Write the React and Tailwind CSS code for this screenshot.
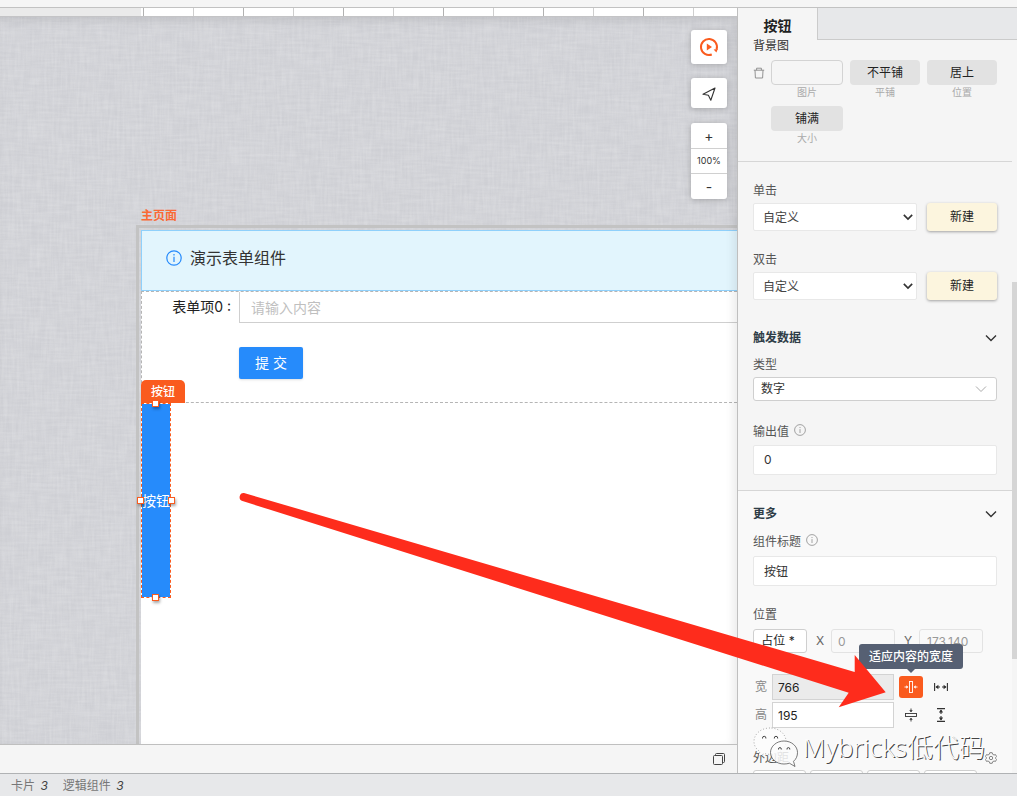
import React, { useState } from 'react';

const ticks = Array.from({ length: 40 }, (_, i) => i);

const ChevronDown = ({ className, strokeWidth = 1.6 }) => (
  <svg viewBox="0 0 12 12" className={className} fill="none" stroke="currentColor" strokeWidth={strokeWidth}>
    <path d="M1 3.5 L6 8.5 L11 3.5" />
  </svg>
);

const InfoIcon = ({ className }) => (
  <svg viewBox="0 0 16 16" className={className} fill="none" stroke="currentColor" strokeWidth="1.2">
    <circle cx="8" cy="8" r="7.2" />
    <path d="M8 6.8 V12" />
    <path d="M8 4 V5.4" />
  </svg>
);

const TrashIcon = () => (
  <svg viewBox="0 0 12 12" className="w-3 h-3 text-[#888]" fill="none" stroke="currentColor" strokeWidth="0.9">
    <path d="M0.8 3.2 H11.2" />
    <path d="M3.6 3.2 V1.2 H8.4 V3.2" />
    <path d="M2 3.2 L2.4 11 H9.6 L10 3.2" />
  </svg>
);

const FitWidthIcon = () => (
  <svg viewBox="0 0 14 14" className="w-3.5 h-3.5" fill="none" stroke="currentColor" strokeWidth="0.9">
    <rect x="5.5" y="1.5" width="3" height="11" />
    <path d="M0.5 7 H3.5 M10.5 7 H13.5" />
    <path d="M2.3 5.2 L4.3 7 L2.3 8.8 Z M11.7 5.2 L9.7 7 L11.7 8.8 Z" fill="currentColor" stroke="none" />
  </svg>
);

const FillWidthIcon = () => (
  <svg viewBox="0 0 14 14" className="w-3.5 h-3.5" fill="none" stroke="currentColor" strokeWidth="1.1">
    <path d="M0.6 3 V11 M13.4 3 V11 M2 7 H6 M8 7 H12" />
    <path d="M1.4 7 L4.4 4.8 V9.2 Z M12.6 7 L9.6 4.8 V9.2 Z" fill="currentColor" stroke="none" />
  </svg>
);

// Woven linen texture behind the artboard
function LinenBackground() {
  return (
    <svg className="absolute inset-0 w-full h-full" aria-hidden="true">
      <filter id="weft" x="0" y="0" width="100%" height="100%">
        <feTurbulence type="fractalNoise" baseFrequency="0.04 0.4" numOctaves="2" seed="3" />
        <feColorMatrix values="0 0 0 0 1  0 0 0 0 1  0 0 0 0 1  1.4 0 0 0 -0.4" />
      </filter>
      <filter id="warp" x="0" y="0" width="100%" height="100%">
        <feTurbulence type="fractalNoise" baseFrequency="0.4 0.04" numOctaves="2" seed="8" />
        <feColorMatrix values="0 0 0 0 1  0 0 0 0 1  0 0 0 0 1  1.4 0 0 0 -0.4" />
      </filter>
      <rect width="100%" height="100%" fill="#cecfd4" />
      <rect width="100%" height="100%" filter="url(#weft)" opacity="0.18" />
      <rect width="100%" height="100%" filter="url(#warp)" opacity="0.18" />
    </svg>
  );
}

function Ruler() {
  return (
    <div className="relative flex h-[9px] shrink-0 overflow-hidden border-b border-[#c4c4c6] bg-white">
      <div className="w-[141px] shrink-0 bg-[#eaeaea] mr-[2px]" />
      {ticks.map((i) => (
        <div
          key={i}
          className={`w-[50px] shrink-0 border-l ${i % 2 ? 'border-[#cfcfcf]' : 'border-[#b2b2b2]'}`}
        />
      ))}
    </div>
  );
}

function CanvasTools() {
  return (
    <div className="absolute right-2.5 top-[13px] flex w-9 flex-col text-[#333]">
      <button aria-label="预览" className="flex h-[34px] items-center justify-center rounded-[3px] bg-white shadow-[0_1px_6px_rgba(0,0,0,0.22)]">
        <svg viewBox="0 0 20 20" className="w-5 h-5" fill="none">
          <path d="M12.8 17.5 A8 8 0 1 1 17.6 12.4" stroke="#fa5b1e" strokeWidth="2" />
          <path d="M14.6 12.6 L18.8 12 L17.4 15.4 Z" fill="#fa5b1e" />
          <path d="M7.8 6.6 L13 10 L7.8 13.4 Z" fill="#fa5b1e" />
        </svg>
      </button>
      <button aria-label="发布" className="mt-3.5 flex h-[30px] items-center justify-center rounded-[3px] bg-white pt-[2px] shadow-[0_1px_6px_rgba(0,0,0,0.22)]">
        <svg viewBox="0 0 14 14" className="w-3.5 h-3.5" fill="none" stroke="currentColor" strokeWidth="1.1" strokeLinejoin="round">
          <path d="M13 1 L1 7.2 L6.4 8.2 L8.8 13.2 Z" />
        </svg>
      </button>
      <div className="mt-[15px] flex flex-col divide-y divide-[#d0d0d0] rounded-[3px] bg-white shadow-[0_1px_6px_rgba(0,0,0,0.22)]">
        <button className="h-[26px] text-sm leading-6">+</button>
        <span className="h-[25px] text-center text-[9px] leading-6">100%</span>
        <button className="h-[25px] text-sm leading-6">-</button>
      </div>
    </div>
  );
}

const Handle = ({ className }) => (
  <span className={`absolute w-[7px] h-[7px] border border-[#fa5b1e] bg-white shadow-[1px_2px_3px_rgba(0,0,0,0.35)] ${className}`} />
);

function Artboard() {
  return (
    <div className="relative ml-[136px] mt-[192px] flex flex-1 flex-col">
      <h2 className="ml-[5px] h-4 text-xs font-bold leading-[14px] text-[#fa6a35]">主页面</h2>
      <div className="flex flex-1 flex-col border-l-3 border-t-3 border-[#c3c3c3] pl-[2px] pt-[2px]">
        <div className="flex flex-1 flex-col bg-white">
          <div className="flex h-[61px] items-center gap-2 border border-r-0 border-[#8fd0fb] bg-[#e2f5fd] pl-6 pb-1.5">
            <InfoIcon className="w-4 h-4 text-[#2389fc]" />
            <span className="text-base leading-6 text-[#333]">演示表单组件</span>
          </div>
          <form className="h-[112px] border-y border-l border-dashed border-[#b5b5b5]" onSubmit={(e) => e.preventDefault()}>
            <div className="flex h-8">
              <label htmlFor="field-0" className="w-[97px] pr-2 text-right text-sm leading-[30px] text-[#222]">表单项0 :</label>
              <input
                id="field-0"
                placeholder="请输入内容"
                className="h-[31px] min-w-0 flex-1 border-b border-l border-[#cfcfcf] bg-white px-[11px] text-sm text-[#333] outline-none placeholder:text-[#bfbfbf]"
              />
            </div>
            <button className="ml-[97px] mt-[23px] h-8 w-16 rounded-xs bg-[#268bfb] text-sm text-white shadow-sm">提 交</button>
          </form>
          <div className="relative h-[195px] w-[30px]">
            <button className="flex h-full w-full items-center justify-center whitespace-nowrap border border-dashed border-[#fa5b1e] bg-[#268bfb] bg-clip-padding text-sm text-white">按钮</button>
            <span className="absolute bottom-full left-0 flex h-[23px] w-11 items-center justify-center rounded-t-[5px] bg-[#fa5b1e] text-xs font-medium text-white">按钮</span>
            <Handle className="-top-[3px] left-[11px]" />
            <Handle className="-bottom-[3px] left-[11px]" />
            <Handle className="-left-1 top-[94px]" />
            <Handle className="-right-1 top-[94px]" />
          </div>
        </div>
      </div>
    </div>
  );
}

function BackgroundCell({ label, value, width }) {
  return (
    <div className={`flex flex-col ${width}`}>
      <button
        aria-label={label}
        className={`h-[25px] rounded-[4px] text-xs text-[#222] ${value ? 'bg-[#e2e2e2]' : 'border border-[#d3d3d3]'}`}
      >
        {value}
      </button>
      <span className="text-center text-[10px] leading-[14px] text-[#aaa]">{label}</span>
    </div>
  );
}

function EventRow({ id, label, className }) {
  return (
    <div className={className}>
      <label htmlFor={id} className="block text-xs leading-5 text-[#555]">{label}</label>
      <div className="mt-[2px] flex gap-2.5">
        <div className="relative flex-1">
          <select id={id} className="block h-7 w-full appearance-none rounded-xs border border-[#e8e8e8] bg-white px-[9px] pt-[2px] text-xs text-[#444]">
            <option>自定义</option>
          </select>
          <ChevronDown className="pointer-events-none absolute right-1 top-2 w-2.5 h-3 text-[#333]" strokeWidth={2} />
        </div>
        <button className="h-7 w-[70px] rounded-[3px] bg-[#fcf5de] text-xs text-[#222] shadow-[0_1px_3px_rgba(0,0,0,0.35)]">新建</button>
      </div>
    </div>
  );
}

const SectionTitle = ({ children, className }) => (
  <div className={`flex items-center justify-between ${className}`}>
    <h3 className="text-xs font-bold leading-5 text-[#2f3d47]">{children}</h3>
    <button aria-label="收起">
      <ChevronDown className="w-3 h-3 text-[#333]" strokeWidth={1.4} />
    </button>
  </div>
);

function Inspector() {
  const [output, setOutput] = useState('0');
  const [title, setTitle] = useState('按钮');
  const [width, setWidth] = useState('766');
  const [height, setHeight] = useState('195');

  return (
    <aside className="relative flex w-[280px] shrink-0 flex-col overflow-hidden border-l border-[#bfbfbf] bg-[#f5f5f5]">
      <div className="flex h-8 shrink-0">
        <button className="w-[79px] pt-1 text-sm font-bold leading-7 text-[#222]">按钮</button>
        <div className="flex-1 border-b border-l border-[#cbcbcb] bg-[#e7e8ea]" />
      </div>

      <div className="flex min-h-0 flex-1">
        <div className="min-w-0 flex-1">
          {/* Background image */}
          <section className="border-b border-[#d6d6d6] px-[15px] pb-4">
            <h4 className="text-xs leading-3 text-[#333]">背景图</h4>
            <div className="mt-2 flex">
              <button aria-label="删除" className="mt-[7px] flex h-3 w-[18px] shrink-0"><TrashIcon /></button>
              <div className="flex flex-wrap gap-[7px]">
                <BackgroundCell label="图片" width="w-[72px]" />
                <BackgroundCell label="平铺" value="不平铺" width="w-[70px]" />
                <BackgroundCell label="位置" value="居上" width="w-[70px]" />
                <BackgroundCell label="大小" value="铺满" width="w-[72px]" />
              </div>
            </div>
          </section>

          {/* Events and output */}
          <section className="border-b border-[#d6d6d6] px-[15px] pb-[15px] pt-[19px]">
            <EventRow id="on-click" label="单击" />
            <EventRow id="on-dblclick" label="双击" className="mt-[19px]" />

            <SectionTitle className="mt-7">触发数据</SectionTitle>
            <label htmlFor="data-type" className="mt-[7px] block text-xs leading-5 text-[#555]">类型</label>
            <div className="relative mt-[2px]">
              <select id="data-type" className="block h-6 w-full appearance-none rounded-[3px] border border-[#cfcfcf] bg-white px-[7px] text-xs text-[#333]">
                <option>数字</option>
              </select>
              <ChevronDown className="pointer-events-none absolute right-2.5 top-1.5 w-3 h-3 text-[#aaa]" strokeWidth={1} />
            </div>
            <div className="mt-[21px] flex gap-[5px]">
              <label htmlFor="output" className="text-xs leading-5 text-[#555]">输出值</label>
              <InfoIcon className="mt-[2px] w-3 h-3 text-[#999]" />
            </div>
            <input
              id="output"
              value={output}
              onChange={(e) => setOutput(e.target.value)}
              className="mt-[3px] block h-[30px] w-full rounded-xs border border-[#e8e8e8] bg-white px-2.5 pb-[2px] text-xs text-[#333] outline-none"
            />
          </section>

          {/* More */}
          <section className="bg-[#f9f9f9] px-[15px] pt-[13px]">
            <SectionTitle>更多</SectionTitle>
            <div className="mt-2 flex gap-[5px]">
              <label htmlFor="title" className="text-xs leading-5 text-[#555]">组件标题</label>
              <InfoIcon className="mt-[2px] w-3 h-3 text-[#999]" />
            </div>
            <input
              id="title"
              value={title}
              onChange={(e) => setTitle(e.target.value)}
              className="mt-1 block h-[30px] w-full rounded-xs border border-[#e8e8e8] bg-white px-2.5 pb-[2px] text-xs text-[#333] outline-none"
            />

            <h4 className="mt-[19px] text-xs leading-5 text-[#555]">位置</h4>
            <div className="mt-1 flex h-6 items-center text-xs text-[#666]">
              <button className="h-6 w-[54px] rounded-[3px] border border-[#cfcfcf] bg-white pr-1 text-[#222]">占位 *</button>
              <label htmlFor="pos-x" className="w-6 pl-[2px] text-center">X</label>
              <input id="pos-x" disabled defaultValue="0" className="h-6 w-16 rounded-[3px] border border-[#e3e3e3] px-1.5 text-[#999]" />
              <label htmlFor="pos-y" className="w-6 pl-[2px] text-center">Y</label>
              <input id="pos-y" disabled defaultValue="173.140" className="h-6 w-16 rounded-[3px] border border-[#e3e3e3] px-[7px] text-[#999]" />
            </div>

            <div className="mt-[21px] flex flex-col gap-[2px] text-xs text-[#888]">
              <div className="flex h-[26px] items-center">
                <label htmlFor="width" className="w-[19px] pl-[2px]">宽</label>
                <input id="width" value={width} onChange={(e) => setWidth(e.target.value)} className="h-[26px] w-[122px] border border-[#d3d3d3] bg-[#ebebeb] px-[5px] text-[#222] outline-none" />
                <div className="relative ml-[5px]">
                  <button aria-label="适应内容的宽度" className="flex h-[22px] w-6 items-center justify-center rounded-[3px] bg-[#fa5b1e] text-white"><FitWidthIcon /></button>
                  <div role="tooltip" className="absolute bottom-[29px] left-1/2 flex h-[25px] w-[104px] -translate-x-1/2 items-center justify-center rounded-[3px] bg-[#566073] text-xs font-medium text-white">
                    适应内容的宽度
                    <span className="absolute left-1/2 top-full -translate-x-1/2 border-4 border-b-0 border-transparent border-t-[#566073]" />
                  </div>
                </div>
                <button aria-label="填充宽度" className="ml-[11px] text-[#333]"><FillWidthIcon /></button>
              </div>
              <div className="flex h-[26px] items-center">
                <label htmlFor="height" className="w-[19px] pl-[2px]">高</label>
                <input id="height" value={height} onChange={(e) => setHeight(e.target.value)} className="h-[26px] w-[122px] border border-[#d3d3d3] bg-white px-[5px] text-[#222] outline-none" />
                <button aria-label="适应高度" className="ml-2.5 rotate-90 text-[#333]"><FitWidthIcon /></button>
                <button aria-label="填充高度" className="ml-4 rotate-90 text-[#333]"><FillWidthIcon /></button>
              </div>
            </div>

            <div className="mt-5 flex items-center justify-between">
              <h4 className="text-xs leading-5 text-[#555]">外边距</h4>
              <button aria-label="设置" className="text-[#777]">
                <svg viewBox="0 0 12 12" className="w-3 h-3" fill="none" stroke="currentColor" strokeWidth="0.9" strokeLinejoin="round">
                  <path d="M4.8 0.7 H7.2 L7.6 2.2 L9 3 L10.5 2.6 L11.6 4.6 L10.6 5.6 V6.4 L11.6 7.4 L10.5 9.4 L9 9 L7.6 9.8 L7.2 11.3 H4.8 L4.4 9.8 L3 9 L1.5 9.4 L0.4 7.4 L1.4 6.4 V5.6 L0.4 4.6 L1.5 2.6 L3 3 L4.4 2.2 Z" />
                  <circle cx="6" cy="6" r="1.7" />
                </svg>
              </button>
            </div>
            <div className="mt-[2px] flex gap-1">
              {['上', '右', '下', '左'].map((side) => (
                <input key={side} aria-label={side} className="h-6 w-[53px] rounded-[3px] border border-[#cfcfcf] bg-white" />
              ))}
            </div>
          </section>
        </div>
        <div className="w-[5px] shrink-0 bg-[#f5f5f5] pt-[242px]">
          <div className="h-[377px] bg-[#d5d5d5]" />
        </div>
      </div>
    </aside>
  );
}

function Watermark() {
  return (
    <div className="pointer-events-none absolute bottom-1 right-8 flex items-end gap-1 font-['Noto_Sans','Noto_Sans_CJK_SC',sans-serif]">
      <svg viewBox="0 0 46 42" className="w-[46px] h-[42px]" fill="#fcfcfc" stroke="#888" strokeWidth="0.7">
        <path d="M17 1 C8 1 1 7 1 14.5 C1 19 3.5 22.5 7 24.5 L5.5 29.5 L11.500 26.500 C13 27 15 27.300 17 27.300 C26 27.300 33 21.500 33 14.500 C33 7 26 1 17 1 Z" strokeDasharray="1 2" />
        <path d="M31 14 C23.500 14 17.500 19.300 17.500 25.500 C17.500 32 23.500 37 31 37 C33 37 34.800 36.700 36.400 36.200 L42 39.500 L40.500 34.300 C43.200 32.200 44.500 29 44.500 25.500 C44.500 19.300 38.600 14 31 14 Z" fillOpacity="0.85" stroke="#444" />
        <g fill="none" stroke="#444" strokeWidth="1">
          <path d="M9.500 11.500 V11 A1.700 1.700 0 0 1 12.900 11 V11.500 M21.300 11.500 V11 A1.700 1.700 0 0 1 24.700 11 V11.500" />
          <path d="M25.500 22.500 V22 A1.400 1.400 0 0 1 28.300 22 V22.500 M34 22.500 V22 A1.400 1.400 0 0 1 36.800 22 V22.500" />
        </g>
      </svg>
      <span className="whitespace-nowrap pb-[2px] text-[26px] font-light leading-10 text-[#fcfcfc] [text-shadow:1px_1px_0_#444]">Mybricks低代码</span>
    </div>
  );
}

export default function App() {
  return (
    <div className="relative flex h-screen flex-col overflow-hidden bg-[#f5f5f5] font-['Inter','Noto_Sans_CJK_SC',sans-serif]">
      <header className="h-2 shrink-0 border-b border-[#c2c2c2]" />

      <div className="relative flex min-h-0 flex-1">
        <main className="flex min-w-0 flex-1 flex-col">
          <Ruler />
          <div className="relative flex min-h-0 flex-1 flex-col overflow-hidden">
            <LinenBackground />
            <Artboard />
            <div className="pointer-events-none absolute inset-0 shadow-[inset_-4px_4px_8px_rgba(0,0,0,0.08)]" />
            <CanvasTools />
          </div>
          <div className="flex h-[29px] shrink-0 items-center justify-end border-t border-[#bfbfbf] pr-3">
            <button aria-label="窗口" className="text-[#444]">
              <svg viewBox="0 0 12 12" className="w-3 h-3" fill="none" stroke="currentColor" strokeWidth="1">
                <rect x="0.5" y="2.5" width="9" height="9" rx="1" />
                <path d="M2.5 2.5 V1.5 A1 1 0 0 1 3.5 0.5 H10.5 A1 1 0 0 1 11.5 1.5 V8.5 A1 1 0 0 1 10.5 9.5 H9.5" />
              </svg>
            </button>
          </div>
        </main>
        <Inspector />
        <Watermark />
      </div>

      <footer className="flex h-[23px] shrink-0 items-center gap-[15px] border-t border-[#b0b2b4] bg-[#e7e8ea] px-[11px] pt-[2px] text-xs text-[#777]">
        <span>卡片 <i className="ml-0.5 text-[#444]">3</i></span>
        <span>逻辑组件 <i className="ml-0.5 text-[#444]">3</i></span>
      </footer>

      {/* Pointer from the canvas to the fit-width button */}
      <svg viewBox="0 0 650 220" className="pointer-events-none absolute right-[128px] top-[490px] h-[220px] w-[650px]" aria-hidden="true">
        <path d="M5 3 L615.7 182 V165 L646.7 202.3 L599.7 217.3 L609.7 202.7 L3.5 11 A4.1 4.1 0 0 1 5 3 Z" fill="#fe2c1c" />
      </svg>
    </div>
  );
}
